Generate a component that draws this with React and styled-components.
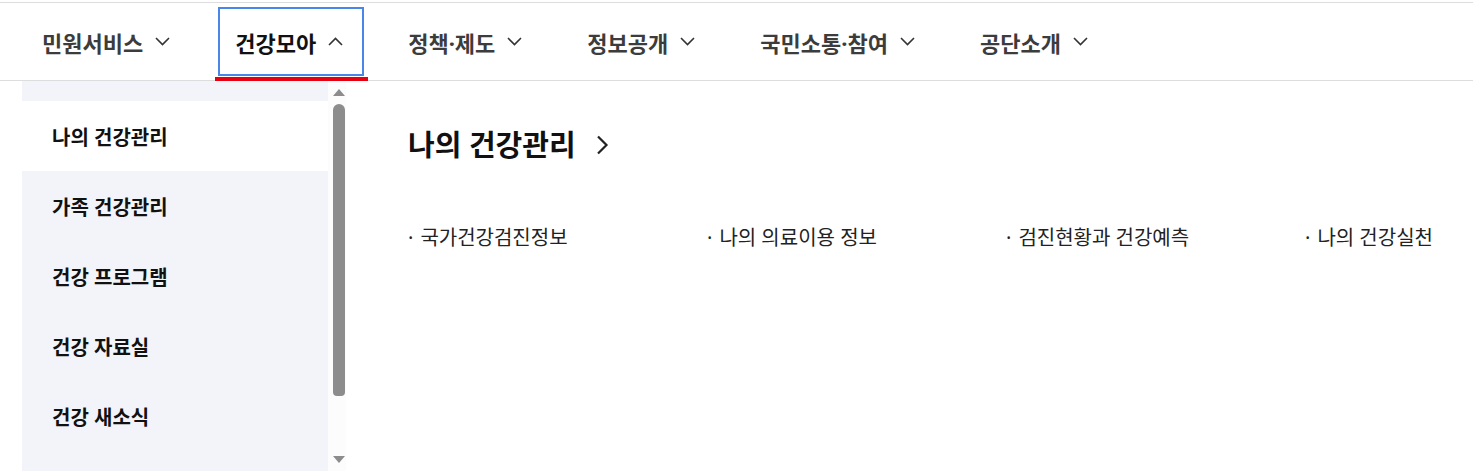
import React, { useLayoutEffect, useRef } from "react";
import styled, { createGlobalStyle } from "styled-components";

const GlobalStyle = createGlobalStyle`
    html, body {
        margin: 0;
        padding: 0;
        background: #fff;
        font-family: "Noto Sans", "Noto Sans CJK KR", sans-serif;
        color: #111;
    }
    * { box-sizing: border-box; }
`;

const Page = styled.div`
    width: 1473px;
    height: 471px;
    overflow: hidden;
    border-top: 2px solid #fff;
    display: flex;
    flex-direction: column;
`;

const TopLine = styled.div`
    height: 1px;
    background: #ddd;
`;

const Nav = styled.ul`
    list-style: none;
    margin: 0;
    padding: 0 0 0 22px;
    height: 78px;
    display: flex;
    gap: 20px;
    border-bottom: 1px solid #ddd;
`;

const NavItem = styled.li`
    position: relative;
    display: flex;
    align-items: center;
    gap: 12px;
    padding: 0 25px 0 20px;
    font-size: 22px;
    font-weight: 700;
    color: ${p => (p.active ? "#111" : "#3c3c3c")};

    &::before {
        content: "";
        display: ${p => (p.active ? "block" : "none")};
        position: absolute;
        left: 3px;
        right: 4px;
        top: 4px;
        bottom: 4px;
        border: 2px solid #4a86e8;
    }

    &::after {
        content: "";
        display: ${p => (p.active ? "block" : "none")};
        position: absolute;
        left: 0;
        right: 0;
        bottom: -1px;
        height: 4px;
        background: #e60012;
    }
`;

const Body = styled.div`
    flex: 1;
    display: flex;
    min-height: 0;
`;

const Side = styled.div`
    margin-left: 22px;
    display: flex;
    height: 100%;
`;

const MenuList = styled.ul`
    list-style: none;
    margin: 0;
    padding: 0;
    width: 306px;
    height: 100%;
    overflow-y: scroll;
    scrollbar-width: none;
    background: #f3f4f9;
    &::-webkit-scrollbar { display: none; }
`;

const MenuItem = styled.li`
    height: 70px;
    display: flex;
    align-items: center;
    padding-left: 30px;
    font-size: 20px;
    font-weight: 700;
    color: #111;
    background: ${p => (p.active ? "#fff" : "transparent")};
`;

const ScrollBar = styled.div`
    width: 18px;
    height: 100%;
    background: #fcfcfc;
    display: flex;
    flex-direction: column;
    align-items: center;
    padding: 8px 0 8px 3px;
`;

const Arrow = styled.div`
    width: 0;
    height: 0;
    border-left: 6px solid transparent;
    border-right: 6px solid transparent;
    ${p => (p.down ? "border-top: 7px solid #8c8c8c;" : "border-bottom: 7px solid #8c8c8c;")}
`;

const Track = styled.div`
    flex: 1;
    width: 12px;
    padding-top: 8px;
`;

const Thumb = styled.div`
    width: 12px;
    height: 292px;
    background: #8c8c8c;
    border-radius: 6px 6px 4px 4px;
`;

const Main = styled.div`
    flex: 1;
    padding: 44px 0 0 62px;
`;

const Title = styled.h2`
    margin: 0;
    display: flex;
    align-items: center;
    gap: 20px;
    font-size: 29px;
    font-weight: 700;
    line-height: 40px;
    color: #111;
`;

const Links = styled.ul`
    list-style: none;
    margin: 60px 0 0;
    padding: 0;
    width: 1196px;
    display: grid;
    grid-template-columns: repeat(4, 1fr);
`;

const LinkItem = styled.li`
    font-size: 20px;
    line-height: 26px;
    color: #222;

    &::before {
        content: "·";
        margin-right: 7px;
    }
`;

const Chevron = ({ up }) => (
    <svg width="15" height="9" viewBox="0 0 15 9" fill="none">
        <path
            d={up ? "M1 8 L7.5 1.5 L14 8" : "M1 1 L7.5 7.5 L14 1"}
            stroke="#333"
            strokeWidth="1.6"
        />
    </svg>
);

const menus = [
    { name: "민원서비스" },
    { name: "건강모아", active: true },
    { name: "정책·제도" },
    { name: "정보공개" },
    { name: "국민소통·참여" },
    { name: "공단소개" },
];

const sideMenus = ["건강모아 홈", "나의 건강관리", "가족 건강관리", "건강 프로그램", "건강 자료실", "건강 새소식", "건강 이벤트"];

const links = ["국가건강검진정보", "나의 의료이용 정보", "검진현황과 건강예측", "나의 건강실천"];

export default function App() {
    const listRef = useRef(null);

    useLayoutEffect(() => {
        if (listRef.current) listRef.current.scrollTop = 50;
    }, []);

    return (
        <Page>
            <GlobalStyle />
            <TopLine />
            <Nav>
                {menus.map((item, i) => (
                    <NavItem key={i} active={item.active}>
                        {item.name}
                        <Chevron up={item.active} />
                    </NavItem>
                ))}
            </Nav>
            <Body>
                <Side>
                    <MenuList ref={listRef}>
                        {sideMenus.map((name, i) => (
                            <MenuItem key={i} active={i === 1}>{name}</MenuItem>
                        ))}
                    </MenuList>
                    <ScrollBar>
                        <Arrow />
                        <Track>
                            <Thumb />
                        </Track>
                        <Arrow down />
                    </ScrollBar>
                </Side>
                <Main>
                    <Title>
                        나의 건강관리
                        <svg width="13" height="20" viewBox="0 0 13 20" fill="none">
                            <path d="M2 1.5 L10.5 10 L2 18.5" stroke="#222" strokeWidth="2.2" />
                        </svg>
                    </Title>
                    <Links>
                        {links.map((name, i) => (
                            <LinkItem key={i}>{name}</LinkItem>
                        ))}
                    </Links>
                </Main>
            </Body>
        </Page>
    );
}
